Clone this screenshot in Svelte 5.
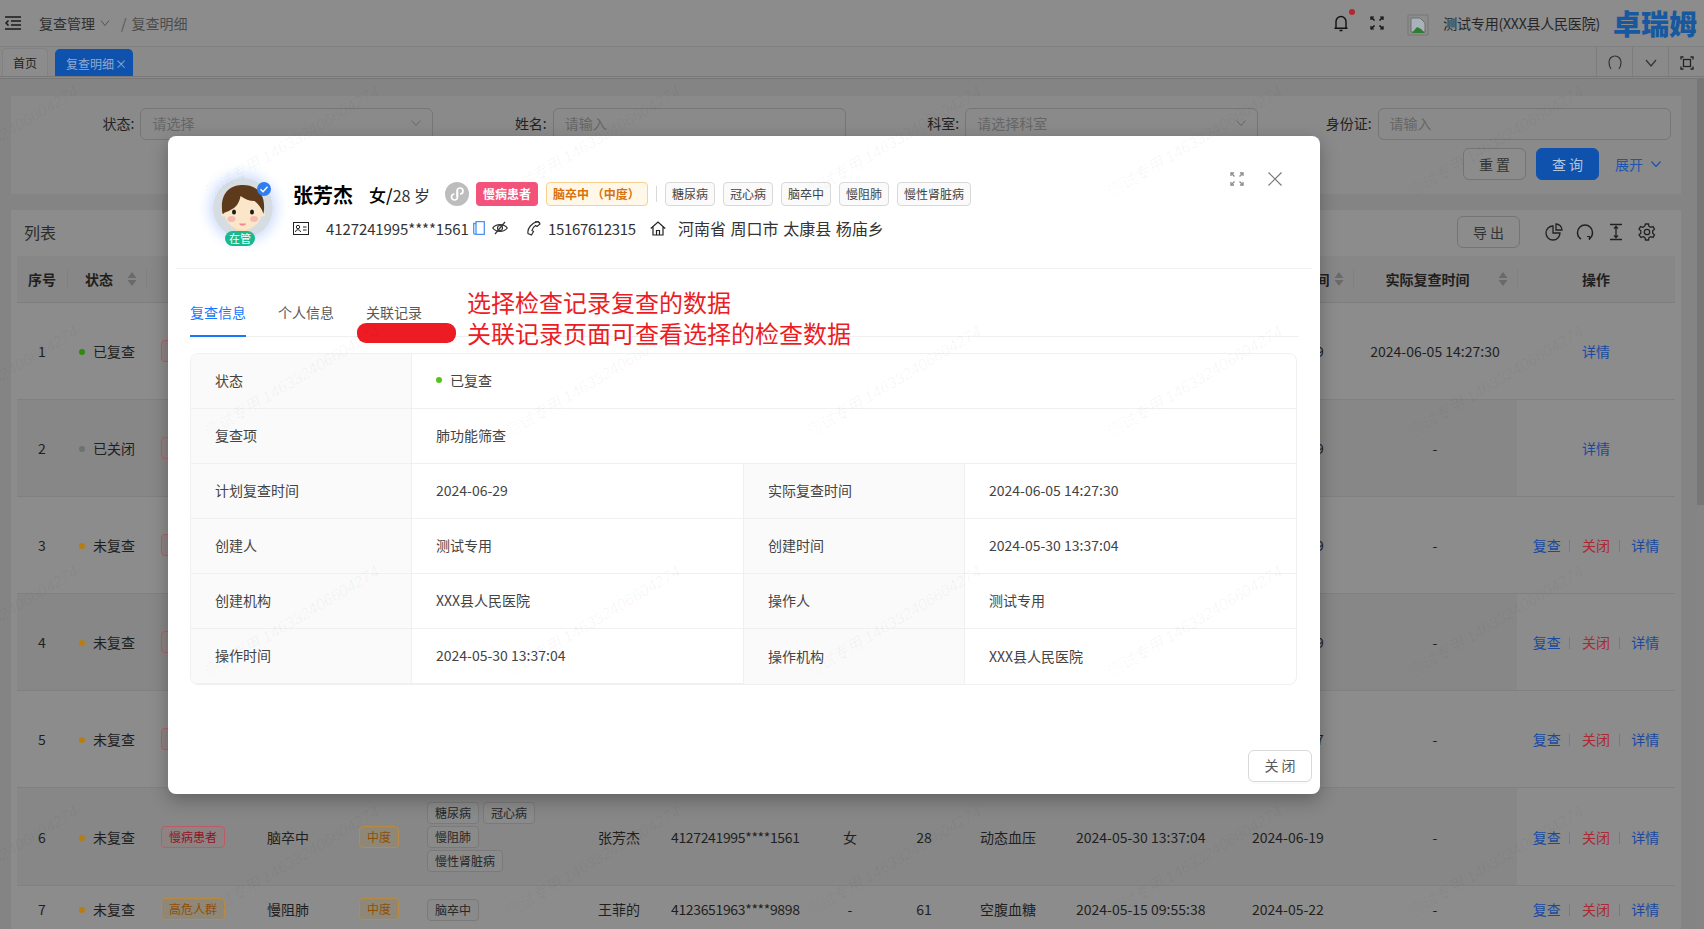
<script>
  const watermarks = Array.from({ length: 42 }, (_, i) => i);

  const comorbidities = ['糖尿病', '冠心病', '慢阻肺', '慢性肾脏病'];
  const fullOps = ['复查', '关闭', '详情'];

  const rows = [
    { no: 1, status: '已复查', dot: 'green', cat: '慢病患者', catType: 'red', disease: '脑卒中', sev: '中度', tags: comorbidities, name: '张芳杰', id: '4127241995****1561', sex: '女', age: 28, item: '肺功能筛查', time: '2024-05-30 13:37:04', plan: '2024-06-29', actual: '2024-06-05 14:27:30', ops: ['详情'] },
    { no: 2, status: '已关闭', dot: 'grey', cat: '慢病患者', catType: 'red', disease: '脑卒中', sev: '中度', tags: comorbidities, name: '张芳杰', id: '4127241995****1561', sex: '女', age: 28, item: '肺功能筛查', time: '2024-05-30 13:37:04', plan: '2024-06-29', actual: '-', ops: ['详情'] },
    { no: 3, status: '未复查', dot: 'orange', cat: '慢病患者', catType: 'red', disease: '脑卒中', sev: '中度', tags: comorbidities, name: '张芳杰', id: '4127241995****1561', sex: '女', age: 28, item: '动态血压', time: '2024-05-30 13:37:04', plan: '2024-06-19', actual: '-', ops: fullOps },
    { no: 4, status: '未复查', dot: 'orange', cat: '慢病患者', catType: 'red', disease: '脑卒中', sev: '中度', tags: comorbidities, name: '张芳杰', id: '4127241995****1561', sex: '女', age: 28, item: '动态血压', time: '2024-05-30 13:37:04', plan: '2024-06-19', actual: '-', ops: fullOps },
    { no: 5, status: '未复查', dot: 'orange', cat: '慢病患者', catType: 'red', disease: '脑卒中', sev: '中度', tags: comorbidities, name: '张芳杰', id: '4127241995****1561', sex: '女', age: 28, item: '动态血压', time: '2024-05-30 13:37:04', plan: '2024-06-17', actual: '-', ops: fullOps },
    { no: 6, status: '未复查', dot: 'orange', cat: '慢病患者', catType: 'red', disease: '脑卒中', sev: '中度', tags: comorbidities, name: '张芳杰', id: '4127241995****1561', sex: '女', age: 28, item: '动态血压', time: '2024-05-30 13:37:04', plan: '2024-06-19', actual: '-', ops: fullOps },
    { no: 7, status: '未复查', dot: 'orange', cat: '高危人群', catType: 'amber', disease: '慢阻肺', sev: '中度', tags: ['脑卒中'], name: '王菲的', id: '4123651963****9898', sex: '-', age: 61, item: '空腹血糖', time: '2024-05-15 09:55:38', plan: '2024-05-22', actual: '-', ops: fullOps, short: true },
  ];

  const columns = [
    { label: '序号', w: 50 }, { label: '状态', w: 79, sort: true }, { label: '人群分类', w: 106 },
    { label: '主要疾病', w: 93 }, { label: '程度', w: 67 }, { label: '合并症', w: 171 },
    { label: '姓名', w: 73 }, { label: '身份证号', w: 159 }, { label: '性别', w: 70 },
    { label: '年龄', w: 78 }, { label: '复查项', w: 98 }, { label: '创建时间', w: 176 },
    { label: '计划复查时间', w: 116, sort: true }, { label: '实际复查时间', w: 164, sort: true }, { label: '操作', w: 158 },
  ];

  const details = [
    { label: '状态', status: '已复查', wide: true },
    { label: '复查项', value: '肺功能筛查', wide: true },
    { label: '计划复查时间', value: '2024-06-29' },
    { label: '实际复查时间', value: '2024-06-05 14:27:30' },
    { label: '创建人', value: '测试专用' },
    { label: '创建时间', value: '2024-05-30 13:37:04' },
    { label: '创建机构', value: 'XXX县人民医院' },
    { label: '操作人', value: '测试专用' },
    { label: '操作时间', value: '2024-05-30 13:37:04' },
    { label: '操作机构', value: 'XXX县人民医院' },
  ];
</script>

<div class="page">
  <header class="topbar">
    <svg class="menu-icon" viewBox="0 0 16 14" width="16" height="14" fill="none" stroke="#1a1a1a" stroke-width="1.5">
      <path d="M0 1h16M6 5h10M6 9h10M0 13h16" />
      <path d="M3.5 4.5 1 7l2.5 2.5" />
    </svg>
    <span class="crumb">复查管理</span>
    <svg class="crumb-chev" viewBox="0 0 10 6" width="10" height="6" fill="none" stroke="#555" stroke-width="1"><path d="m1 .5 4 5 4-5" /></svg>
    <span class="crumb-sep">/</span>
    <span class="crumb dim">复查明细</span>

    <div class="top-right">
      <span class="bell">
        <svg viewBox="0 0 14 18" width="14" height="18" fill="none" stroke="#111" stroke-width="1.4"><path d="M2 14V7.5a5 5 0 0 1 10 0V14M.5 14.2h13M5.5 16.5h3" /></svg>
        <i class="bell-dot"></i>
      </span>
      <svg class="top-expand" viewBox="0 0 14 14" width="14" height="14" fill="none" stroke="#111" stroke-width="1.5">
        <path d="M1 1l3.5 3.5M13 1 9.500 4.500M1 13l3.500-3.500M13 13 9.500 9.500" />
        <path d="M1 4V1h3M10 1h3v3M1 10v3h3M10 13h3v-3" stroke-width="1.2" />
      </svg>
      <svg class="broken-img" viewBox="0 0 22 22" width="22" height="22">
        <path d="M1 1h20v20H1z" fill="none" stroke="#777" />
        <path d="M4 4h9l5 5v9H4z" fill="#a9b2b8" stroke="#6f6f6f" />
        <path d="m5 19 5-6 4 2 4 4z" fill="#2f7d32" />
      </svg>
      <span class="user">测试专用(XXX县人民医院)</span>
      <span class="logo">卓瑞姆</span>
    </div>
  </header>

  <nav class="tabbar">
    <div class="page-tab">首页</div>
    <div class="page-tab active">复查明细<span class="tab-x">×</span></div>
    <div class="tab-tools">
      <button class="tool" aria-label="刷新">
        <svg viewBox="0 0 14 18" width="14" height="18" fill="none" stroke="#333" stroke-width="1.2"><path d="M3 15C1 12.500 1 9 1 8a6 6 0 0 1 12 0c0 1 0 4.500-2 7" /></svg>
      </button>
      <button class="tool" aria-label="更多">
        <svg viewBox="0 0 12 8" width="12" height="8" fill="none" stroke="#333" stroke-width="1.2"><path d="m1 1 5 6 5-6" /></svg>
      </button>
      <button class="tool" aria-label="全屏">
        <svg viewBox="0 0 14 14" width="14" height="14" fill="none" stroke="#222" stroke-width="1.300"><path d="M1 3.500V1h2.500M10.500 1H13v2.500M1 10.500V13h2.500M10.500 13H13v-2.500" /><rect x="3.500" y="3.500" width="7" height="7" /></svg>
      </button>
    </div>
  </nav>

  <div class="main">
    <div class="content">
      <section class="filter-card">
        <div class="filter-grid">
          <label class="field"><span>状态:</span><div class="control">请选择<svg viewBox="0 0 10 6" width="10" height="6" fill="none" stroke="#666"><path d="m.5.500 4.500 5 4.500-5" /></svg></div></label>
          <label class="field"><span>姓名:</span><div class="control">请输入</div></label>
          <label class="field"><span>科室:</span><div class="control">请选择科室<svg viewBox="0 0 10 6" width="10" height="6" fill="none" stroke="#666"><path d="m.5.500 4.500 5 4.500-5" /></svg></div></label>
          <label class="field"><span>身份证:</span><div class="control">请输入</div></label>
        </div>
        <div class="filter-actions">
          <button class="btn">重 置</button>
          <button class="btn primary">查 询</button>
          <span class="expand-link">展开
            <svg viewBox="0 0 10 6" width="10" height="6" fill="none" stroke="#1c57ad" stroke-width="1.300"><path d="m.5.500 4.500 5 4.500-5" /></svg>
          </span>
        </div>
      </section>

      <section class="list-card">
        <div class="list-head">
          <h2>列表</h2>
          <div class="list-tools">
            <button class="btn">导 出</button>
            <div class="tool-icons">
              <svg viewBox="0 0 18 18" width="18" height="18" fill="none" stroke="#222" stroke-width="1.300"><path d="M8 3a7 7 0 1 0 7 7H8zM11 1a6 6 0 0 1 6 6h-6z" /></svg>
              <svg viewBox="0 0 18 18" width="18" height="18" fill="none" stroke="#222" stroke-width="1.500"><path d="M5 16C2.500 14.500 1.500 12 1.500 9.500a7.500 7.500 0 0 1 15 0c0 2.500-1 5-3.500 6.500" /><path d="M11 13.500h2.500V17" stroke-width="1.200" /></svg>
              <svg viewBox="0 0 18 18" width="18" height="18" fill="none" stroke="#222" stroke-width="1.300"><path d="M3 1.500h12M3 16.500h12M9 3.500v11M7 5.500l2-2 2 2M7 12.500l2 2 2-2" /></svg>
              <svg viewBox="0 0 18 18" width="18" height="18" fill="none" stroke="#222" stroke-width="1.300"><path d="M7.500 1h3l.5 2.400 1.700 1 2.300-.8 1.500 2.600-1.800 1.600v2.400l1.800 1.600-1.500 2.600-2.300-.8-1.700 1-.5 2.400h-3l-.5-2.400-1.700-1-2.300.8L1 11.800l1.800-1.600V7.800L1 6.200l1.500-2.600 2.300.8 1.700-1z" /><circle cx="9" cy="9" r="2.700" /></svg>
            </div>
          </div>
        </div>

        <table class="data-table">
          <colgroup>
            {#each columns as col}<col style="width:{col.w}px" />{/each}
          </colgroup>
          <thead>
            <tr>
              {#each columns as col}
                <th class:sortable={col.sort}>
                  {col.label}
                  {#if col.sort}
                    <svg class="sort" viewBox="0 0 10 16" width="10" height="16" fill="#6a6a6a"><path d="M5 1 9.500 7H.5zM5 15 .5 9h9z" /></svg>
                  {/if}
                </th>
              {/each}
            </tr>
          </thead>
          <tbody>
            {#each rows as row, i}
              <tr class:even={i % 2 === 1} class:short={row.short}>
                <td class="center">{row.no}</td>
                <td class="status-cell"><i class="dot {row.dot}"></i>{row.status}</td>
                <td class="pad"><span class="tag {row.catType}">{row.cat}</span></td>
                <td class="pad">{row.disease}</td>
                <td class="pad sev-cell"><span class="tag amber">{row.sev}</span></td>
                <td class="pad tags-cell">
                  <div class="tag-wrap">
                    {#each row.tags as t}<span class="tag plain">{t}</span>{/each}
                  </div>
                </td>
                <td class="pad">{row.name}</td>
                <td class="pad id-cell">{row.id}</td>
                <td class="center">{row.sex}</td>
                <td class="center">{row.age}</td>
                <td class="pad item-cell">{row.item}</td>
                <td class="pad">{row.time}</td>
                <td class="pad">{row.plan}</td>
                <td class="center">{row.actual}</td>
                <td class="center ops">
                  {#each row.ops as op, j}
                    {#if j > 0}<i class="op-sep"></i>{/if}
                    <span class:danger={op === '关闭'}>{op}</span>
                  {/each}
                </td>
              </tr>
            {/each}
          </tbody>
        </table>
      </section>
    </div>
    <div class="scrollbar"><div class="thumb"></div></div>
  </div>

  <div class="modal" role="dialog">
    <div class="modal-head">
      <div class="avatar">
        <svg viewBox="0 0 60 60" width="60" height="60">
          <circle cx="30" cy="30" r="30" fill="#d5dce2" />
          <path d="M23 48h14v8l-7 4-7-4z" fill="#f7d9b8" />
          <ellipse cx="30" cy="33" rx="19" ry="19" fill="#fbe6c9" />
          <circle cx="10.500" cy="36" r="2.500" fill="#fbe6c9" />
          <circle cx="49.500" cy="36" r="2.500" fill="#fbe6c9" />
          <path d="M9.500 36C6 14 18 7 30 7s24 7 20.500 29c-2-6-5-10-9-13-5 0-10-2-14-5-1 7-5 12-10 14-3 2-6 2-7.500 4z" fill="#5c3a1b" />
          <ellipse cx="21" cy="34" rx="2" ry="2.500" fill="#1b1b1b" />
          <ellipse cx="39" cy="34" rx="2" ry="2.500" fill="#1b1b1b" />
          <ellipse cx="18.500" cy="41" rx="4" ry="3" fill="#f6b9b4" />
          <ellipse cx="41" cy="41" rx="4" ry="3" fill="#f6b9b4" />
          <path d="M26 45.500h7c-.5 3-6 3-7 0z" fill="#ef8b90" />
        </svg>
        <span class="check">
          <svg viewBox="0 0 14 14" width="14" height="14"><circle cx="7" cy="7" r="7" fill="#2f7df0" /><path d="m3.500 7.200 2.500 2.500 4.500-5" fill="none" stroke="#fff" stroke-width="1.500" /></svg>
        </span>
        <span class="managed">在管</span>
      </div>

      <div class="patient">
        <div class="patient-top">
          <span class="p-name">张芳杰</span>
          <span class="p-sex"><b>女/</b>28 岁</span>
          <span class="mini-link">
            <svg viewBox="0 0 24 24" width="24" height="24" fill="none" stroke="#fff" stroke-width="1.700"><path d="M12.500 8.500v6.500a3 3 0 1 1-3-3M12 15V9a3 3 0 1 1 3 3" /></svg>
          </span>
          <span class="ptag chronic">慢病患者</span>
          <span class="ptag stroke">脑卒中 （中度）</span>
          <i class="vsep"></i>
          {#each ['糖尿病', '冠心病', '脑卒中', '慢阻肺', '慢性肾脏病'] as t}
            <span class="ptag light">{t}</span>
          {/each}
        </div>
        <div class="patient-info">
          <svg class="i-id" viewBox="0 0 16 13" width="16" height="13" fill="none" stroke="#222"><rect x=".5" y=".5" width="15" height="12" /><circle cx="5" cy="5" r="1.700" /><path d="M2.500 10c0-3 5-3 5 0M10 5h3.500M10 8h3.500" /></svg>
          <span class="id-no">4127241995****1561</span>
          <svg class="i-copy" viewBox="0 0 12 14" width="12" height="14" fill="none" stroke="#4b93f5" stroke-width="1.300"><path d="M3 .700h8.300v12.600H3zM3 2.500H.7v9.500q0 1.300 2.300 1.300" /></svg>
          <svg class="i-eye" viewBox="0 0 16 14" width="16" height="14" fill="none" stroke="#333" stroke-width="1.200"><path d="M.7 7C4 2.500 12 2.500 15.300 7 12 11.500 4 11.500.7 7z" /><circle cx="8" cy="7" r="2.500" /><path d="M13 1 3 13" /></svg>
          <svg class="i-phone" viewBox="0 0 14 15" width="14" height="15" fill="none" stroke="#333" stroke-width="1.200"><path d="M1 12.500c-1-5 4-11 10-12l2 2.500-3 2.500-1.500-1c-1.500 1-3 3-3.500 5l1.500 1-2 3.500z" /><path d="M8 .8c2-.3 3.500.2 5 1" /></svg>
          <span class="phone">15167612315</span>
          <svg class="i-home" viewBox="0 0 16 15" width="16" height="15" fill="none" stroke="#222" stroke-width="1.200"><path d="M.8 7.500 8 1l7.200 6.500M3 6v8h10V6M6.500 14V9.500h3V14" /></svg>
          <span class="addr">河南省 周口市 太康县 杨庙乡</span>
        </div>
      </div>

      <div class="head-actions">
        <svg viewBox="0 0 14 14" width="14" height="14" fill="none" stroke="#8a8a8a" stroke-width="1.300"><path d="M1 1l3.500 3.500M13 1 9.500 4.500M1 13l3.500-3.500M13 13 9.500 9.500" /><path d="M1 4V1h3M10 1h3v3M1 10v3h3M10 13h3v-3" /></svg>
        <svg viewBox="0 0 14 14" width="14" height="14" fill="none" stroke="#7a7a7a" stroke-width="1.200"><path d="m.5.500 13 13M13.500.5l-13 13" /></svg>
      </div>
    </div>

    <div class="modal-body">
      <div class="modal-tabs">
        <span class="mtab on">复查信息</span>
        <span class="mtab">个人信息</span>
        <span class="mtab">关联记录</span>
      </div>

      <div class="detail-grid">
        {#each details as d}
          <div class="d-label">{d.label}</div>
          <div class="d-value" class:wide={d.wide}>
            {#if d.status}<i class="dot live"></i>{d.status}{:else}{d.value}{/if}
          </div>
        {/each}
      </div>
    </div>

    <div class="modal-foot">
      <button class="close-btn">关 闭</button>
    </div>

    <i class="scribble"></i>
    <div class="annotation">选择检查记录复查的数据<br />关联记录页面可查看选择的检查数据</div>
  </div>

  <div class="watermark" aria-hidden="true">
    {#each watermarks as w (w)}
      <div class="wm-cell"><span>测试专用 146332406604274</span></div>
    {/each}
  </div>
</div>

<style>
  :global(body) {
    margin: 0;
    font-family: "Noto Sans CJK SC", "Noto Sans", sans-serif;
  }

  .page {
    position: relative;
    height: 100vh;
    overflow: hidden;
    display: flex;
    flex-direction: column;
    background: #848484;
    color: #1f1f1f;
    font-size: 14px;
  }

  /* top bar */
  .topbar {
    flex: none;
    height: 46px;
    display: flex;
    align-items: center;
    padding-left: 5px;
    background: #8c8c8c;
    border-bottom: 1px solid #808080;
  }
  .menu-icon { margin-right: 18px; }
  .crumb { color: #303030; }
  .crumb.dim { color: #4c4c4c; }
  .crumb-chev { margin: 0 0 0 5px; }
  .crumb-sep { margin: 0 5px 0 11px; color: #555; }
  .top-right {
    margin-left: auto;
    display: flex;
    align-items: center;
    padding-right: 7px;
  }
  .bell { position: relative; display: flex; margin-right: 22px; }
  .bell-dot {
    position: absolute;
    top: -5px;
    right: -7px;
    width: 6px;
    height: 6px;
    border-radius: 50%;
    background: #b3262e;
  }
  .top-expand { margin-right: 23px; }
  .broken-img { margin: 4px 14px 0 0; }
  .user { color: #262626; margin-right: 13px; font-size: 14px; letter-spacing: -.2px; }
  .logo {
    font-size: 28px;
    line-height: 32px;
    font-weight: 900;
    color: #18589f;
  }

  /* page tabs */
  .tabbar {
    flex: none;
    height: 32px;
    display: flex;
    align-items: flex-end;
    gap: 7px;
    padding-left: 2px;
    background: #8a8a8a;
    border-bottom: 3px double #787878;
    box-sizing: border-box;
  }
  .page-tab {
    height: 27px;
    padding: 0 10px;
    line-height: 27px;
    font-size: 12px;
    background: #8c8c8c;
    border: 1px solid #828282;
    border-bottom: 0;
    border-radius: 5px 5px 0 0;
  }
  .page-tab.active {
    width: 78px;
    box-sizing: border-box;
    background: #0f52ad;
    border-color: #0f52ad;
    color: #8fa9d0;
    white-space: nowrap;
  }
  .tab-x { font-size: 12px; margin-left: 1px; }
  .tab-tools { margin-left: auto; display: flex; height: 32px; margin-bottom: -3px; }
  .tool {
    width: 36px;
    padding: 0;
    display: grid;
    place-items: center;
    background: none;
    border: 0;
    border-left: 1px solid #7d7d7d;
  }

  /* main */
  .main { flex: 1; min-height: 0; display: flex; }
  .content {
    flex: 1;
    min-width: 0;
    padding: 17px 16px 0 11px;
    display: flex;
    flex-direction: column;
    gap: 16px;
  }
  .scrollbar { flex: none; width: 7px; background: #858585; }
  .thumb { height: 426px; background: #767676; }

  .filter-card {
    flex: none;
    height: 98px;
    box-sizing: border-box;
    padding-top: 12px;
    background: #8a8a8a;
  }
  .filter-grid {
    display: grid;
    grid-template-columns: repeat(4, 412.4px);
    margin-left: 10px;
  }
  .field {
    display: flex;
    justify-content: flex-end;
    align-items: center;
    gap: 6px;
    color: #222;
    line-height: 18px;
  }
  .field span { padding-bottom: 2px; }
  .control {
    width: 293px;
    height: 32px;
    box-sizing: border-box;
    display: flex;
    align-items: center;
    justify-content: space-between;
    padding: 0 11px 2px;
    border: 1px solid #767676;
    border-radius: 6px;
    color: #666;
  }
  .filter-actions {
    display: flex;
    justify-content: flex-end;
    align-items: center;
    gap: 10px;
    margin-top: 8px;
    padding-right: 20px;
  }
  .btn {
    width: 63px;
    height: 32px;
    padding: 0;
    font: inherit;
    font-size: 14px;
    color: #333;
    background: #8c8c8c;
    border: 1px solid #747474;
    border-radius: 6px;
  }
  .btn.primary { background: #0f52ad; border-color: #0f52ad; color: #b5c4da; }
  .expand-link { margin-left: 6px; color: #1c57ad; display: inline-flex; align-items: center; gap: 8px; }

  .list-card {
    flex: 1;
    min-height: 0;
    padding-top: 6px;
    background: #8c8c8c;
  }
  .list-head {
    height: 32px;
    display: flex;
    align-items: center;
    justify-content: space-between;
    padding: 0 25px 0 13px;
    margin-bottom: 8px;
  }
  .list-head h2 { margin: 0; font-size: 16px; font-weight: 400; color: #2b2b2b; }
  .list-tools { display: flex; align-items: center; gap: 25px; }
  .tool-icons { display: flex; gap: 13px; }

  /* table */
  .data-table {
    width: 1658px;
    margin: 0 6px;
    table-layout: fixed;
    border-collapse: collapse;
    color: #1f1f1f;
  }
  .data-table th {
    position: relative;
    height: 45px;
    padding: 0 0 1px;
    font-size: 14px;
    font-weight: 700;
    background: #878787;
    border-bottom: 1px solid #7e7e7e;
  }
  .data-table th + th::before {
    content: "";
    position: absolute;
    left: 0;
    top: 13px;
    height: 19px;
    border-left: 1px solid #818181;
  }
  .data-table th.sortable { padding-right: 15px; }
  .sort { position: absolute; right: 9px; top: 15px; }
  .data-table td {
    height: 96px;
    padding: 0;
    border-bottom: 1px solid #808080;
    white-space: nowrap;
  }
  tr:nth-child(6) td { height: 97px; }
  tr.short td { height: 46px; }
  tr.even td { background: #878787; }
  tr.even td.ops { background: #8c8c8c; }
  td.center { text-align: center; }
  td.pad { padding-left: 15px; }
  td.sev-cell { padding-left: 14px; }
  td.item-cell { padding-left: 17px; }
  td.id-cell { letter-spacing: -.35px; }
  td.status-cell { padding-left: 12px; }
  .dot {
    display: inline-block;
    width: 6px;
    height: 6px;
    border-radius: 50%;
    margin-right: 8px;
    vertical-align: 2px;
  }
  .dot.green { background: #2f8a10; }
  .dot.grey { background: #707070; }
  .dot.orange { background: #b67d12; }
  .tag {
    display: inline-block;
    height: 22px;
    line-height: 20px;
    box-sizing: border-box;
    padding: 0 7px;
    font-size: 12px;
    border: 1px solid #7a7a7a;
    border-radius: 4px;
  }
  .tag.red { color: #8f1526; border-color: #bc5b66; background: #8e8383; }
  .tag.amber { color: #8e4f05; border-color: #b98a3f; background: #8f8878; }
  .tag.plain { color: #262626; background: #8a8a8a; }
  .tag-wrap { display: flex; flex-wrap: wrap; gap: 2px 4px; width: 112px; padding-top: 1px; }
  td.ops { color: #1a4aa0; }
  td.ops .danger { color: #a82b34; }
  .op-sep {
    display: inline-block;
    width: 1px;
    height: 12px;
    margin: 0 8.5px;
    background: #7a7a7a;
    vertical-align: -1px;
  }

  /* modal */
  .modal {
    position: absolute;
    left: 168px;
    top: 136px;
    width: 1152px;
    height: 658px;
    display: flex;
    flex-direction: column;
    background: #fff;
    border-radius: 8px;
    box-shadow: 0 6px 18px rgba(0, 0, 0, .28);
  }
  .modal-head {
    position: relative;
    flex: none;
    height: 133px;
    box-sizing: border-box;
    margin: 0 8px;
    padding: 42px 0 0 37px;
    display: flex;
    gap: 20px;
    border-bottom: 1px solid #f0f0f0;
  }
  .avatar {
    position: relative;
    flex: none;
    width: 60px;
    height: 60px;
    border-radius: 50%;
    box-shadow: 0 0 14px 3px #c6d8ff;
  }
  .check {
    position: absolute;
    left: 44px;
    top: 2px;
    width: 14px;
    height: 14px;
  }
  .managed {
    position: absolute;
    left: 12px;
    top: 53px;
    width: 30px;
    height: 15px;
    border-radius: 8px;
    background: #19b98f;
    color: #fff;
    font-size: 11px;
    line-height: 15px;
    text-align: center;
  }
  .patient { display: flex; flex-direction: column; gap: 11px; margin-top: 4px; }
  .patient-top { display: flex; align-items: center; height: 24px; }
  .p-name { font-size: 20px; font-weight: 700; color: #000; margin-right: 16px; }
  .p-sex { font-size: 16px; color: #333; margin-right: 15px; white-space: nowrap; }
  .p-sex b { font-size: 17px; font-weight: 500; color: #000; }
  .mini-link {
    width: 24px;
    height: 24px;
    border-radius: 50%;
    background: #bdbdbd;
    margin-right: 7px;
    display: flex;
  }
  .ptag {
    height: 24px;
    box-sizing: border-box;
    padding: 0 6px;
    border-radius: 4px;
    font-size: 12px;
    line-height: 22px;
    white-space: pre;
  }
  .chronic { background: #f3537a; color: #fff; font-weight: 700; line-height: 24px; margin-right: 8px; width: 62px; padding: 0 7px; }
  .stroke {
    width: 102px;
    padding: 0 6px;
    background: #fff7e8;
    border: 1px solid #fbd08f;
    color: #d9720c;
    font-weight: 700;
  }
  .vsep { width: 1px; height: 16px; background: #d9d9d9; margin: 0 8px; }
  .light {
    background: #fafafa;
    border: 1px solid #d9d9d9;
    color: #444;
    margin-right: 8px;
  }
  .patient-info { display: flex; align-items: center; height: 22px; color: #333; font-size: 15px; white-space: nowrap; }
  .i-id { margin-right: 17px; }
  .id-no { width: 147px; letter-spacing: -.1px; }
  .i-copy { margin-right: 7px; }
  .i-eye { margin-right: 19px; }
  .i-phone { margin-right: 7px; }
  .phone { width: 102px; letter-spacing: -.35px; }
  .i-home { margin-right: 12px; }
  .addr { font-size: 16px; word-spacing: 1px; }
  .head-actions {
    position: absolute;
    right: 30px;
    top: 36px;
    display: flex;
    gap: 24px;
  }
  .modal-body { flex: 1; min-height: 0; padding: 0 21px 0 22px; }
  .modal-tabs {
    height: 68px;
    box-sizing: border-box;
    display: flex;
    align-items: flex-end;
    gap: 32px;
    border-bottom: 1px solid #f0f0f0;
    color: #595959;
  }
  .mtab { height: 35px; line-height: 22px; box-sizing: border-box; }
  .mtab.on { color: #1677ff; border-bottom: 2px solid #1677ff; margin-bottom: -1px; height: 36px; }
  .detail-grid {
    margin: 16px 0 0 0;
    width: 1107px;
    display: grid;
    grid-template-columns: 221px 332px 221px 333px;
    grid-auto-rows: 55px;
    box-sizing: border-box;
    border: 1px solid #f0f0f0;
    border-radius: 8px;
    overflow: hidden;
    color: #444;
  }
  .d-label, .d-value {
    display: flex;
    align-items: center;
    padding: 0 0 2px 24px;
    border-bottom: 1px solid #f0f0f0;
    border-right: 1px solid #f0f0f0;
    box-sizing: border-box;
  }
  .d-label { background: #fafafa; }
  .d-value.wide { grid-column: span 3; }
  .d-value:nth-last-child(-n + 2), .d-label:nth-last-child(-n + 2) { border-bottom: 0; }
  .dot.live { background: #52c41a; margin-right: 8px; }
  .modal-foot {
    flex: none;
    display: flex;
    justify-content: flex-end;
    padding: 0 8px 12px 0;
  }
  .close-btn {
    width: 64px;
    height: 32px;
    padding: 0 0 2px;
    font: inherit;
    color: #595959;
    background: #fff;
    border: 1px solid #d9d9d9;
    border-radius: 6px;
    box-shadow: 0 2px 0 rgba(0, 0, 0, .02);
  }

  /* hand-drawn annotation on the screenshot */
  .scribble {
    position: absolute;
    left: 189px;
    top: 187px;
    width: 99px;
    height: 20px;
    border-radius: 9px;
    background: #ed1c24;
  }
  .annotation {
    position: absolute;
    left: 299px;
    top: 150px;
    font-size: 24px;
    line-height: 31px;
    color: #ed1c24;
    white-space: nowrap;
  }

  .watermark {
    position: absolute;
    left: -91px;
    top: -57px;
    display: grid;
    grid-template-columns: repeat(7, 301px);
    grid-auto-rows: 240px;
    pointer-events: none;
    color: rgba(0, 0, 0, .04);
    font-size: 16px;
    font-style: italic;
    font-family: "Liberation Sans", "Noto Sans CJK SC", sans-serif;
  }
  .wm-cell span {
    display: inline-block;
    line-height: 20px;
    white-space: nowrap;
    transform: rotate(-31deg);
    transform-origin: 0 100%;
  }
</style>
